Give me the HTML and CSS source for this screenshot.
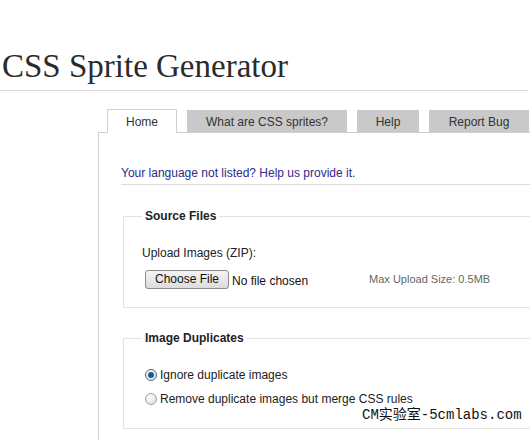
FILE: index.html
```html
<!DOCTYPE html>
<html>
<head>
<meta charset="utf-8">
<link rel="stylesheet" href="styles.css">
</head>
<body>
<header class="header">
  <h1 class="title">CSS Sprite Generator</h1>
</header>
<main class="main">
  <ul class="tabs">
    <li class="tab tab-active">Home</li>
    <li class="tab tab-what">What are CSS sprites?</li>
    <li class="tab tab-help">Help</li>
    <li class="tab tab-bug">Report Bug</li>
  </ul>
  <section class="panel">
    <p class="lang">Your language not listed? Help us provide it.</p>
    <fieldset class="group group-source">
      <legend class="legend">Source Files</legend>
      <div class="label">Upload Images (ZIP):</div>
      <div class="file-row">
        <span class="btn">Choose File</span>
        <span class="nofile">No file chosen</span>
        <span class="maxsize">Max Upload Size: 0.5MB</span>
      </div>
    </fieldset>
    <fieldset class="group group-dup">
      <legend class="legend">Image Duplicates</legend>
      <label class="radio-row"><span class="radio radio-on"></span>Ignore duplicate images</label>
      <label class="radio-row"><span class="radio"></span>Remove duplicate images but merge CSS rules</label>
      <div class="watermark">CM实验室-5cmlabs.com</div>
    </fieldset>
  </section>
</main>
</body>
</html>
```
FILE: styles.css
```css
html, body {
  margin: 0;
  padding: 0;
  background: #fff;
  width: 530px;
  height: 440px;
  overflow: hidden;
}
body {
  font-family: "Liberation Sans", Arial, sans-serif;
  font-size: 12px;
  color: #222;
}
.header {
  height: 91px;
  border-bottom: 1px solid #d8d8d8;
  box-sizing: border-box;
  margin-right: 2px;
}
.title {
  margin: 0;
  padding: 47px 0 0 2px;
  font-family: "Liberation Serif", Georgia, serif;
  font-weight: normal;
  font-size: 33px;
  line-height: 38px;
  color: #2b2b2b;
}
.main {
  margin-left: 98px;
  padding-top: 18px;
}
.tabs {
  list-style: none;
  margin: 0;
  padding: 0 0 0 9px;
  display: flex;
  align-items: flex-end;
  gap: 10px;
  height: 23px;
}
.tab {
  height: 22px;
  line-height: 24px;
  text-align: center;
  background: #c9c9c9;
  color: #333;
  box-sizing: border-box;
}
.tab-active {
  height: 24px;
  width: 70px;
  background: #fff;
  border: 1px solid #d0d0d0;
  border-bottom: none;
  margin-bottom: -1px;
  position: relative;
  z-index: 1;
  line-height: 25px;
}
.tab-what { width: 160px; }
.tab-help { width: 62px; }
.tab-bug { width: 100px; }
.panel {
  border-top: 1px solid #d0d0d0;
  border-left: 1px solid #d0d0d0;
  padding: 0 0 0 22px;
  height: 320px;
}
.lang {
  margin: 0;
  padding-top: 32px;
  height: 19px;
  line-height: 16px;
  color: #2b2b8c;
  border-bottom: 1px solid #dcdcdc;
}
.group {
  margin: 0 0 0 2px;
  padding: 0 0 0 18px;
  border: 1px solid #e2e2e2;
  border-right: none;
}
.group-source {
  margin-top: 24px;
  height: 99px;
  box-sizing: border-box;
}
.group-dup {
  margin-top: 23px;
  height: 98px;
  box-sizing: border-box;
  position: relative;
}
.legend {
  font-weight: bold;
  font-size: 12px;
  color: #222;
  padding: 0 3px;
  margin-left: 0;
}
.label {
  margin-top: 22px;
  line-height: 16px;
}
.file-row {
  display: flex;
  align-items: center;
  margin-top: 8px;
  height: 20px;
}
.btn {
  display: inline-block;
  height: 19px;
  line-height: 17px;
  padding: 0 9px;
  border: 1px solid #8c8c8c;
  border-radius: 3px;
  background: linear-gradient(#f4f4f4, #dcdcdc);
  box-sizing: border-box;
  margin-left: 3px;
  color: #111;
}
.nofile {
  margin-left: 3px;
  color: #111;
  position: relative;
  top: 2px;
}
.maxsize {
  margin-left: 61px;
  font-size: 11px;
  color: #666;
}
.radio-row {
  display: flex;
  align-items: center;
  height: 16px;
  margin-left: 3px;
  color: #222;
}
.radio-row:first-of-type {
  margin-top: 22px;
}
.radio-row + .radio-row {
  margin-top: 8px;
}
.radio {
  width: 12px;
  height: 12px;
  border-radius: 50%;
  border: 1px solid #a0a0a0;
  background: radial-gradient(circle at 40% 35%, #fff, #d8d8d8);
  box-sizing: border-box;
  margin-right: 3px;
  position: relative;
}
.radio-on {
  border-color: #4a6e93;
}
.radio-on::after {
  content: "";
  position: absolute;
  left: 2px;
  top: 2px;
  width: 6px;
  height: 6px;
  border-radius: 50%;
  background: #1f5a8c;
}
.watermark {
  position: absolute;
  left: 238px;
  top: 62px;
  font-family: "Liberation Mono", "Noto Sans CJK SC", monospace;
  font-size: 14px;
  color: #111;
  line-height: 17px;
}
```
